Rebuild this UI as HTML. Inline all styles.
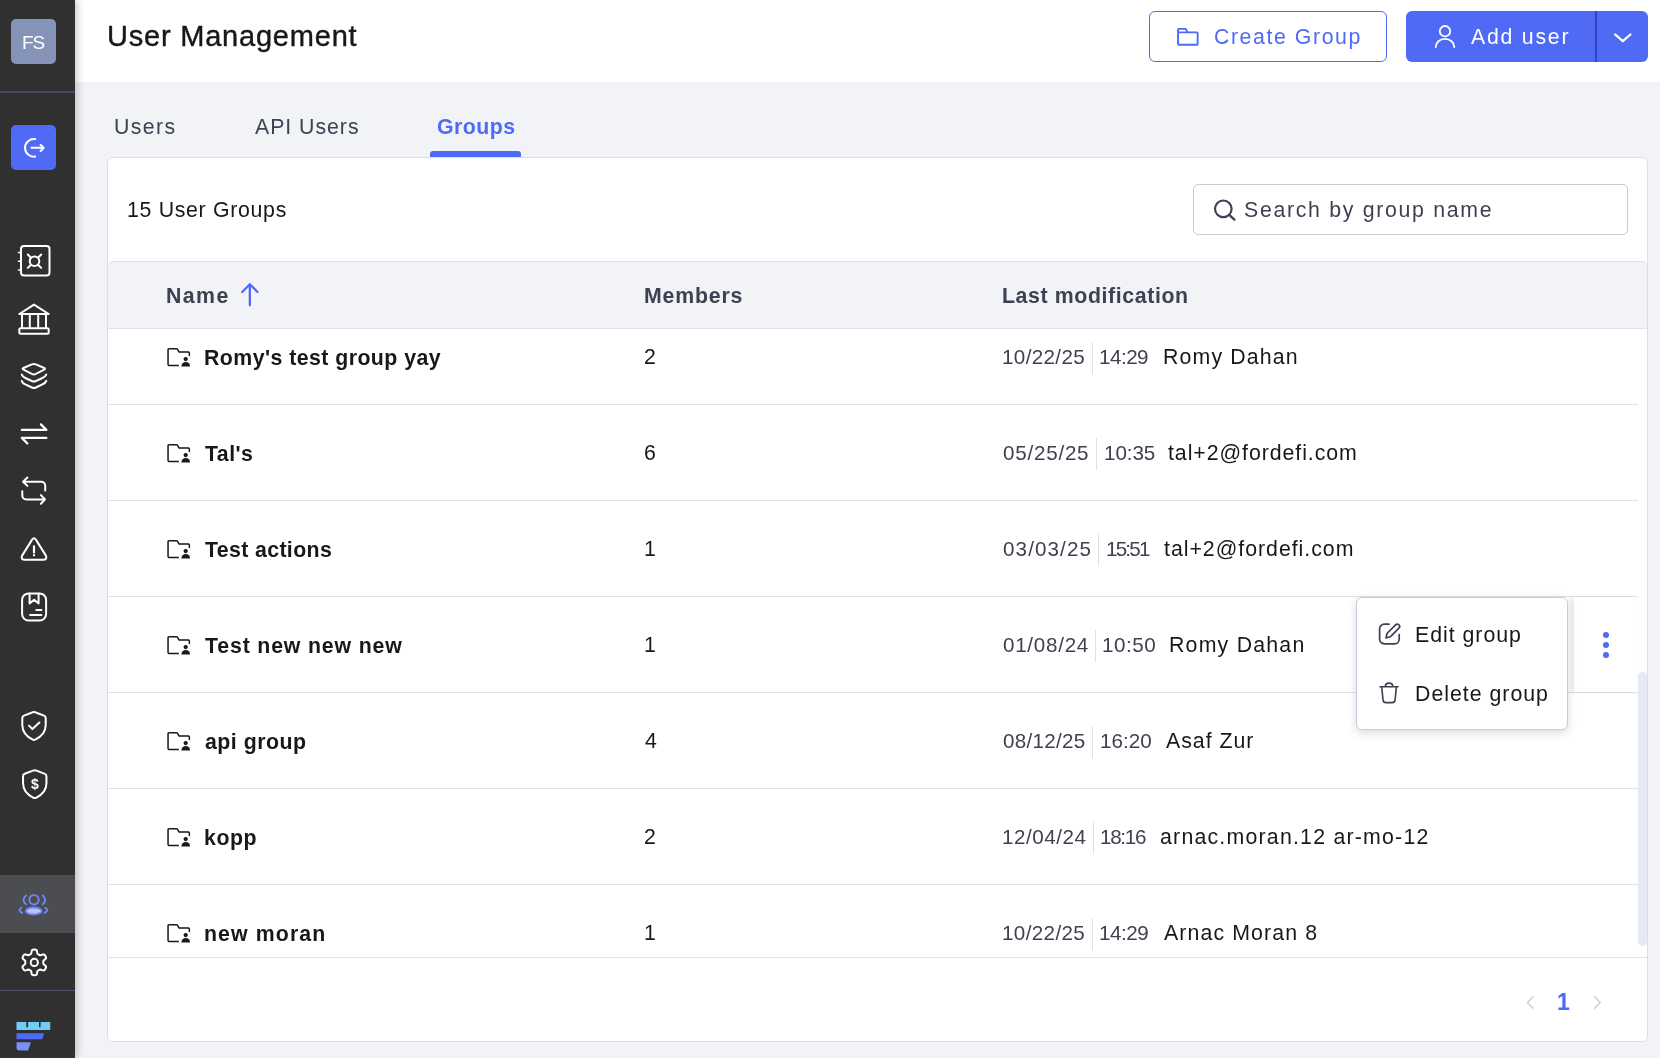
<!DOCTYPE html>
<html lang="en">
<head>
<meta charset="utf-8">
<title>User Management</title>
<style>
*{box-sizing:border-box;margin:0;padding:0}
html,body{width:1660px;height:1058px;overflow:hidden}
body{font-family:"Liberation Sans",sans-serif;background:#f2f3f7;color:#17181c;position:relative}
.abs{position:absolute}
.t{position:absolute;white-space:nowrap;font-weight:400;will-change:transform}
.b{font-weight:700}
#side{position:absolute;left:0;top:0;width:75px;height:1058px;background:#303030;box-shadow:1px 0 9px rgba(0,0,0,.27);z-index:5}
#side .av{position:absolute;left:11px;top:19px;width:45px;height:45px;border-radius:5px;background:#8693b8;color:#fff}
#side .hr1{position:absolute;left:0;top:91px;width:75px;height:2px;background:#474b60}
#side .hr2{position:absolute;left:0;top:990px;width:75px;height:1px;background:#4d5270}
#side .out{position:absolute;left:11px;top:125px;width:45px;height:45px;border-radius:5px;background:#4f6af5}
#side .act{position:absolute;left:0;top:875px;width:75px;height:58px;background:#4c4d50}
#side svg{position:absolute;overflow:visible;will-change:transform}
.ic{fill:none;stroke:#fff;stroke-width:2;stroke-linecap:round;stroke-linejoin:round}
#head{position:absolute;left:75px;top:0;width:1585px;height:82px;background:#fff}
#head h1{font-weight:400;font-size:inherit}
.btn{position:absolute;top:11px;height:51px;border-radius:6px}
#cg{left:1074px;width:238px;border:1px solid #4f6af5;color:#4f6af5;background:#fff}
#au{left:1331px;width:242px;background:#4f6af5;color:#fff}
#au i{position:absolute;left:189px;top:0;width:2px;height:51px;background:#3043c4}
#tabs{position:absolute;left:0;top:0;color:#3e4152}
#tabs .on{color:#4f6af5}
#ul{position:absolute;left:430px;top:151px;width:91px;height:6px;border-radius:3px 3px 0 0;background:#4f6af5}
#card{position:absolute;left:107px;top:157px;width:1541px;height:885px;background:#fff;border:1px solid #dcdde6;border-radius:6px;overflow:hidden}
#srch{position:absolute;left:1085px;top:26px;width:435px;height:51px;border:1px solid #c8cad4;border-radius:5px;background:#fff;color:#3e4152}
#thead{position:absolute;left:0;top:103px;width:1539px;height:68px;background:#f2f3f7;border-top:1px solid #e0e1e7;border-bottom:1px solid #e0e1e7;border-radius:5px 5px 0 0;color:#3e4152}
#rows{position:absolute;left:0;top:171px;width:1530px;height:628px;overflow:hidden}
.row{position:absolute;left:0;width:1530px;height:96px;border-bottom:1px solid #e0e1e7}
.row .fi{position:absolute;left:58px;top:38px;overflow:visible}
.row .nm{font-weight:700}
.row .dt{color:#3e4152}
.row .dv{position:absolute;top:33px;width:1px;height:32px;background:#e0e1e7}
#foot{position:absolute;left:0;top:799px;width:1539px;height:84px;border-top:1px solid #e0e1e7;background:#fff}
#foot .t{color:#4f6af5}
#sb{position:absolute;left:1530px;top:514px;width:9px;height:274px;border-radius:5px;background:#e8e9f7}
#stk{position:absolute;left:1574px;top:597px;width:63px;height:95px;background:#fff;box-shadow:-3px 0 4px rgba(30,30,40,.09)}
#stk b{position:absolute;left:29px;width:6px;height:6px;border-radius:3px;background:#4f6af5}
#menu{position:absolute;left:1356px;top:597px;width:212px;height:133px;background:#fff;border:1px solid #c9cadb;border-radius:6px;box-shadow:0 3px 10px rgba(30,30,50,.16);z-index:4}
#menu svg{position:absolute;overflow:visible}
</style>
</head>
<body>
<div id="side">
  <div class="av"><span class="t " style="left:10.8px;top:9.8px;font-size:19px;line-height:27px;letter-spacing:-1.01px;">FS</span></div>
  <div class="hr1"></div>
  <div class="out"></div>
  <div class="act"></div>
  <div class="hr2"></div>
  <svg class="abs" style="left:0;top:0" width="75" height="1058" viewBox="0 0 75 1058">
  <g class="ic" stroke-width="1.700">
    <!-- logout -->
    <path d="M35.200 139.100a8.850 8.850 0 1 0 0 17.500"/>
    <path d="M31.400 147.850h12.300M40.600 144.700l3.150 3.150l-3.150 3.150"/>
  </g>
  <g class="ic">
    <!-- safe -->
    <rect x="21" y="246.100" width="28.500" height="29.400" rx="3"/>
    <path d="M18.5 252.5h2M18.5 261.2h2M18.5 270h2" stroke-width="1.6"/>
    <circle cx="34.5" cy="261.2" r="4.8"/>
    <path d="M31 257.7l-3.2-3.2M38 257.7l3.2-3.2M31 264.7l-3.2 3.2M38 264.7l3.2 3.2"/>
    <!-- bank -->
    <path d="M19.3 314L34 304.6L48.7 314z"/>
    <path d="M22 314.5v13M29.8 314.5v13M38.2 314.5v13M46 314.5v13"/>
    <rect x="19.300" y="328.300" width="29.400" height="5.500" rx="1.500"/>
    <!-- layers -->
    <path d="M31.800 364.400Q33.850 363.400 35.900 364.400L44.200 368Q45.800 368.800 44.200 369.600L35.900 373.900Q33.850 374.900 31.800 373.900L23.500 369.600Q21.700 368.800 23.500 368Z"/>
    <path d="M21.750 374.500Q22.300 376.600 25.300 378L31.800 381Q33.850 382 35.900 381L42.400 378Q45.600 376.600 46.300 374.500M21.750 380.900Q22.300 383 25.300 384.400L31.800 387.500Q33.850 388.500 35.900 387.500L42.400 384.400Q45.600 383 46.300 380.900"/>
    <!-- swap -->
    <path d="M21.800 429.900H46.400L40.900 424.400M46.400 437.900H21.800L27.300 443.400" stroke-width="2.200"/>
    <!-- repeat -->
    <path d="M27.400 477.500L23 481.700L27.400 485.900M23 481.700H41.200a4 4 0 0 1 4 4V490.400"/>
    <path d="M40.900 495.100L45 499.400L40.900 503.700M45 499.400H26.300a4 4 0 0 1-4-4V491.300"/>
    <!-- warning -->
    <path d="M32.100 539.600q1.900-2.900 3.800 0L45.900 555.600q1.600 3.600-2.200 4.100H24.300q-3.800-.5-2.200-4.100z"/>
    <path d="M34 546.300v6.200M34 555.200v.1" stroke-width="2.200"/>
    <!-- archive -->
    <rect x="22.100" y="593.400" width="24" height="27.100" rx="6.500"/>
    <path d="M29.600 593.800v9.600l4.500-3.600l4.500 3.600v-9.600"/>
    <path d="M36.300 609.900h5.100M30.100 615.100h11.300"/>
    <!-- shield check -->
    <path d="M34.00 712.00 Q33.00 712.00 31.50 712.70 L24.00 715.60 Q22.30 716.30 22.30 718.00 V725.00 Q22.30 734.50 32.80 739.60 Q34.00 740.20 35.20 739.60 Q45.70 734.50 45.70 725.00 V718.00 Q45.70 716.30 44.00 715.60 L36.50 712.70 Q35.00 712.00 34.00 712.00 Z"/>
    <path d="M29 725.600l3.400 3.400l7-6.500"/>
    <!-- shield dollar -->
    <path d="M34.75 770.20 Q33.75 770.20 32.25 770.90 L24.75 773.80 Q23.05 774.50 23.05 776.20 V783.20 Q23.05 792.70 33.55 797.80 Q34.75 798.40 35.95 797.80 Q46.45 792.70 46.45 783.20 V776.20 Q46.45 774.50 44.75 773.80 L37.25 770.90 Q35.75 770.20 34.75 770.20 Z"/>
  </g>
  <text x="35" y="789.400" text-anchor="middle" font-family="Liberation Sans,sans-serif" font-size="14" font-weight="700" fill="#fff">$</text>
  <!-- users (active) -->
  <g fill="none" stroke="#7386f7" stroke-width="1.900" stroke-linecap="round">
    <circle cx="34" cy="899.800" r="4.700"/>
    <path d="M26.100 895.400Q20.800 899.900 26.100 904.400M42.700 895.400Q47.500 899.900 42.700 904.400"/>
    <ellipse cx="33.700" cy="911" rx="7.900" ry="3.500" fill="#bcc5fb"/>
    <path d="M21.500 907.800Q17.300 910.600 22.100 912.900M45.300 907.800Q49.500 910.600 44.500 912.900"/>
  </g>
  <!-- gear -->
  <g class="ic">
    <circle cx="34.300" cy="962.400" r="3.600"/>
    <path d="M43.3 962.4L43.3 962.0L43.3 961.6L43.3 961.2L43.5 960.8L44.0 960.3L44.8 959.6L45.7 958.8L46.0 958.1L46.0 957.5L45.9 957.0L45.6 956.5L45.4 956.0L45.1 955.5L44.8 955.1L44.4 954.7L43.8 954.4L43.1 954.4L42.0 954.7L41.0 955.1L40.3 955.2L39.9 955.2L39.5 955.0L39.1 954.8L38.8 954.6L38.5 954.4L38.1 954.2L37.8 954.0L37.5 953.6L37.3 953.0L37.1 951.9L36.9 950.8L36.5 950.1L36.0 949.8L35.4 949.7L34.9 949.6L34.3 949.6L33.7 949.6L33.2 949.7L32.6 949.8L32.1 950.1L31.7 950.8L31.5 951.9L31.3 953.0L31.1 953.6L30.8 954.0L30.5 954.2L30.1 954.4L29.8 954.6L29.5 954.8L29.1 955.0L28.7 955.2L28.3 955.2L27.6 955.1L26.6 954.7L25.5 954.4L24.8 954.4L24.2 954.7L23.8 955.1L23.5 955.5L23.2 956.0L23.0 956.5L22.7 957.0L22.6 957.5L22.6 958.1L22.9 958.8L23.8 959.6L24.6 960.3L25.1 960.8L25.3 961.2L25.3 961.6L25.3 962.0L25.3 962.4L25.3 962.8L25.3 963.2L25.3 963.6L25.1 964.0L24.6 964.5L23.8 965.2L22.9 966.0L22.6 966.7L22.6 967.3L22.7 967.8L23.0 968.3L23.2 968.8L23.5 969.3L23.8 969.7L24.2 970.1L24.8 970.4L25.5 970.4L26.6 970.1L27.6 969.7L28.3 969.6L28.7 969.6L29.1 969.8L29.5 970.0L29.8 970.2L30.1 970.4L30.5 970.6L30.8 970.8L31.1 971.2L31.3 971.8L31.5 972.9L31.7 974.0L32.1 974.7L32.6 975.0L33.2 975.1L33.7 975.2L34.3 975.2L34.9 975.2L35.4 975.1L36.0 975.0L36.5 974.7L36.9 974.0L37.1 972.9L37.3 971.8L37.5 971.2L37.8 970.8L38.1 970.6L38.5 970.4L38.8 970.2L39.1 970.0L39.5 969.8L39.9 969.6L40.3 969.6L41.0 969.7L42.0 970.1L43.1 970.4L43.8 970.4L44.4 970.1L44.8 969.7L45.1 969.3L45.4 968.8L45.6 968.3L45.9 967.8L46.0 967.3L46.0 966.7L45.7 966.0L44.8 965.2L44.0 964.5L43.5 964.0L43.3 963.6L43.3 963.2L43.3 962.8z"/>
  </g>
  <!-- logo -->
  <path d="M16.500 1022h9.800v5.300h1.800v-5.300h10.900v5.300h1.600v-5.300h9.600v8h-33.700z" fill="#6fcdf5"/>
  <path d="M16.500 1033.300h27.600l-1.900 6h-25.700z" fill="#4f6af5"/>
  <path d="M16.500 1042.300h14.400l-2.700 8.200h-8.700q-3 0-3-3z" fill="#7b8ef8"/>
</svg>

</div>
<div id="head">
  <h1><span class="t " style="left:31.7px;top:16.4px;font-size:29px;line-height:41px;letter-spacing:0.79px;-webkit-text-stroke:.4px #17181c;">User Management</span></h1>
  <div class="btn" id="cg">
    <svg class="abs" style="left:27px;top:16px" width="23" height="20" viewBox="0 0 23 20"><path d="M1.050 15.950V1.650a.8 .8 0 0 1 .8-.8h6.300q.6 0 .9 .5l1.600 3.050h9.200a.8 .8 0 0 1 .8 .8v10.750a.8 .8 0 0 1-.8 .8H1.850a.8 .8 0 0 1-.8-.8zM1.050 4.400h9.600" fill="none" stroke="#4f6af5" stroke-width="1.900" stroke-linejoin="round"/></svg>
    <span class="t " style="left:63.9px;top:9.5px;font-size:21.3px;line-height:30px;letter-spacing:1.57px;">Create Group</span></div>
  <div class="btn" id="au">
    <svg class="abs" style="left:27px;top:13px" width="24" height="26" viewBox="0 0 24 26"><circle cx="12" cy="7.200" r="5.200" fill="none" stroke="#fff" stroke-width="1.800"/><path d="M2.700 23a9.300 8.100 0 0 1 18.600 0" fill="none" stroke="#fff" stroke-width="1.800" stroke-linecap="round"/></svg>
    <span class="t " style="left:65.3px;top:10.5px;font-size:21.3px;line-height:30px;letter-spacing:1.76px;">Add user</span><i></i>
    <svg class="abs" style="left:207px;top:21px" width="20" height="12" viewBox="0 0 20 12"><path d="M2.200 2.500l7.600 6.700l7.600-6.700" fill="none" stroke="#fff" stroke-width="2.300" stroke-linecap="round" stroke-linejoin="round"/></svg>
  </div>
</div>
<div id="tabs"><span class="t " style="left:114.1px;top:111.8px;font-size:21.3px;line-height:30px;letter-spacing:1.36px;">Users</span><span class="t " style="left:255.0px;top:111.8px;font-size:21.3px;line-height:30px;letter-spacing:0.96px;">API Users</span><span class="t b on" style="left:437.1px;top:111.8px;font-size:21.3px;line-height:30px;letter-spacing:0.46px;">Groups</span></div>
<div id="ul"></div>
<div id="card">
  <span class="t " style="left:19.0px;top:37.2px;font-size:21.3px;line-height:30px;letter-spacing:0.69px;">15 User Groups</span>
  <div id="srch">
    <svg class="abs" style="left:19px;top:13px" width="26" height="26" viewBox="0 0 26 26"><circle cx="10.300" cy="10.800" r="8.300" fill="none" stroke="#3e4152" stroke-width="2.200"/><path d="M16.500 17.100l4.900 4.600" stroke="#3e4152" stroke-width="2.300" stroke-linecap="round"/></svg>
    <span class="t " style="left:50.2px;top:10.3px;font-size:21.3px;line-height:30px;letter-spacing:1.69px;">Search by group name</span></div>
  <div id="thead">
    <span class="t b" style="left:57.9px;top:18.5px;font-size:21.3px;line-height:30px;letter-spacing:1.41px;">Name</span>
    <svg class="abs" style="left:132px;top:21px" width="20" height="26" viewBox="0 0 20 26"><path d="M9.850 22.300V1.300M2.200 9l7.650-7.700l7.650 7.700" fill="none" stroke="#4f6af5" stroke-width="2.300" stroke-linecap="round" stroke-linejoin="round"/></svg>
    <span class="t b" style="left:535.5px;top:18.5px;font-size:21.3px;line-height:30px;letter-spacing:0.81px;">Members</span><span class="t b" style="left:894.0px;top:18.5px;font-size:21.3px;line-height:30px;letter-spacing:0.61px;">Last modification</span>
  </div>
  <div id="rows">
    <div class="row" style="top:-20px"><svg class="fi" width="25" height="20" viewBox="0 0 25 20"><path d="M12.300 18.550H3.050a1 1 0 0 1-1-1V2.750a1 1 0 0 1 1-1h7.300q.8 0 1.200 .7l1.500 2.600h9.300a1 1 0 0 1 1 1v2.500" fill="none" stroke="#17181c" stroke-width="1.500" stroke-linejoin="round" stroke-linecap="round"/><circle cx="19.700" cy="12.100" r="2.150" fill="#17181c"/><path d="M15.400 19.400a4.350 4.300 0 0 1 8.700 0z" fill="#17181c"/></svg><span class="t nm" style="left:96.2px;top:33.8px;font-size:21.3px;line-height:30px;letter-spacing:0.45px;">Romy's test group yay</span><span class="t mb" style="left:535.5px;top:32.9px;font-size:21.3px;line-height:30px;">2</span><span class="t dt" style="left:894.2px;top:32.8px;font-size:20.6px;line-height:29px;letter-spacing:0.36px;">10/22/25</span><span class="t dt" style="left:991.3px;top:32.8px;font-size:20.6px;line-height:29px;letter-spacing:-0.50px;">14:29</span><span class="t wh" style="left:1055.0px;top:32.8px;font-size:21.3px;line-height:30px;letter-spacing:1.15px;">Romy Dahan</span><i class="dv" style="left:984px"></i></div>
    <div class="row" style="top:76px"><svg class="fi" width="25" height="20" viewBox="0 0 25 20"><path d="M12.300 18.550H3.050a1 1 0 0 1-1-1V2.750a1 1 0 0 1 1-1h7.300q.8 0 1.200 .7l1.500 2.600h9.300a1 1 0 0 1 1 1v2.500" fill="none" stroke="#17181c" stroke-width="1.500" stroke-linejoin="round" stroke-linecap="round"/><circle cx="19.700" cy="12.100" r="2.150" fill="#17181c"/><path d="M15.400 19.400a4.350 4.300 0 0 1 8.700 0z" fill="#17181c"/></svg><span class="t nm" style="left:97.2px;top:33.8px;font-size:21.3px;line-height:30px;letter-spacing:0.44px;">Tal's</span><span class="t mb" style="left:535.5px;top:32.9px;font-size:21.3px;line-height:30px;">6</span><span class="t dt" style="left:895.2px;top:32.8px;font-size:20.6px;line-height:29px;letter-spacing:0.77px;">05/25/25</span><span class="t dt" style="left:995.5px;top:32.8px;font-size:20.6px;line-height:29px;letter-spacing:-0.07px;">10:35</span><span class="t wh" style="left:1060.3px;top:32.8px;font-size:21.3px;line-height:30px;letter-spacing:0.94px;">tal+2@fordefi.com</span><i class="dv" style="left:988px"></i></div>
    <div class="row" style="top:172px"><svg class="fi" width="25" height="20" viewBox="0 0 25 20"><path d="M12.300 18.550H3.050a1 1 0 0 1-1-1V2.750a1 1 0 0 1 1-1h7.300q.8 0 1.200 .7l1.500 2.600h9.300a1 1 0 0 1 1 1v2.500" fill="none" stroke="#17181c" stroke-width="1.500" stroke-linejoin="round" stroke-linecap="round"/><circle cx="19.700" cy="12.100" r="2.150" fill="#17181c"/><path d="M15.400 19.400a4.350 4.300 0 0 1 8.700 0z" fill="#17181c"/></svg><span class="t nm" style="left:96.9px;top:33.8px;font-size:21.3px;line-height:30px;letter-spacing:0.37px;">Test actions</span><span class="t mb" style="left:535.5px;top:32.9px;font-size:21.3px;line-height:30px;">1</span><span class="t dt" style="left:895.2px;top:32.8px;font-size:20.6px;line-height:29px;letter-spacing:1.11px;">03/03/25</span><span class="t dt" style="left:997.9px;top:32.8px;font-size:20.6px;line-height:29px;letter-spacing:-1.80px;">15:51</span><span class="t wh" style="left:1056.0px;top:32.8px;font-size:21.3px;line-height:30px;letter-spacing:0.98px;">tal+2@fordefi.com</span><i class="dv" style="left:990px"></i></div>
    <div class="row" style="top:268px"><svg class="fi" width="25" height="20" viewBox="0 0 25 20"><path d="M12.300 18.550H3.050a1 1 0 0 1-1-1V2.750a1 1 0 0 1 1-1h7.300q.8 0 1.200 .7l1.500 2.600h9.300a1 1 0 0 1 1 1v2.500" fill="none" stroke="#17181c" stroke-width="1.500" stroke-linejoin="round" stroke-linecap="round"/><circle cx="19.700" cy="12.100" r="2.150" fill="#17181c"/><path d="M15.400 19.400a4.350 4.300 0 0 1 8.700 0z" fill="#17181c"/></svg><span class="t nm" style="left:96.9px;top:33.8px;font-size:21.3px;line-height:30px;letter-spacing:0.84px;">Test new new new</span><span class="t mb" style="left:535.5px;top:32.9px;font-size:21.3px;line-height:30px;">1</span><span class="t dt" style="left:895.2px;top:32.8px;font-size:20.6px;line-height:29px;letter-spacing:0.73px;">01/08/24</span><span class="t dt" style="left:994.2px;top:32.8px;font-size:20.6px;line-height:29px;letter-spacing:0.55px;">10:50</span><span class="t wh" style="left:1061.4px;top:32.8px;font-size:21.3px;line-height:30px;letter-spacing:1.22px;">Romy Dahan</span><i class="dv" style="left:987px"></i></div>
    <div class="row" style="top:364px"><svg class="fi" width="25" height="20" viewBox="0 0 25 20"><path d="M12.300 18.550H3.050a1 1 0 0 1-1-1V2.750a1 1 0 0 1 1-1h7.300q.8 0 1.200 .7l1.500 2.600h9.300a1 1 0 0 1 1 1v2.500" fill="none" stroke="#17181c" stroke-width="1.500" stroke-linejoin="round" stroke-linecap="round"/><circle cx="19.700" cy="12.100" r="2.150" fill="#17181c"/><path d="M15.400 19.400a4.350 4.300 0 0 1 8.700 0z" fill="#17181c"/></svg><span class="t nm" style="left:96.9px;top:33.8px;font-size:21.3px;line-height:30px;letter-spacing:0.51px;">api group</span><span class="t mb" style="left:536.5px;top:32.9px;font-size:21.3px;line-height:30px;">4</span><span class="t dt" style="left:895.2px;top:32.8px;font-size:20.6px;line-height:29px;letter-spacing:0.30px;">08/12/25</span><span class="t dt" style="left:991.6px;top:32.8px;font-size:20.6px;line-height:29px;letter-spacing:0.05px;">16:20</span><span class="t wh" style="left:1057.7px;top:32.8px;font-size:21.3px;line-height:30px;letter-spacing:0.99px;">Asaf Zur</span><i class="dv" style="left:984px"></i></div>
    <div class="row" style="top:460px"><svg class="fi" width="25" height="20" viewBox="0 0 25 20"><path d="M12.300 18.550H3.050a1 1 0 0 1-1-1V2.750a1 1 0 0 1 1-1h7.300q.8 0 1.200 .7l1.500 2.600h9.300a1 1 0 0 1 1 1v2.500" fill="none" stroke="#17181c" stroke-width="1.500" stroke-linejoin="round" stroke-linecap="round"/><circle cx="19.700" cy="12.100" r="2.150" fill="#17181c"/><path d="M15.400 19.400a4.350 4.300 0 0 1 8.700 0z" fill="#17181c"/></svg><span class="t nm" style="left:96.2px;top:33.8px;font-size:21.3px;line-height:30px;letter-spacing:0.55px;">kopp</span><span class="t mb" style="left:535.5px;top:32.9px;font-size:21.3px;line-height:30px;">2</span><span class="t dt" style="left:894.2px;top:32.8px;font-size:20.6px;line-height:29px;letter-spacing:0.53px;">12/04/24</span><span class="t dt" style="left:991.8px;top:32.8px;font-size:20.6px;line-height:29px;letter-spacing:-1.30px;">18:16</span><span class="t wh" style="left:1052.4px;top:32.8px;font-size:21.3px;line-height:30px;letter-spacing:1.22px;">arnac.moran.12 ar-mo-12</span><i class="dv" style="left:985px"></i></div>
    <div class="row" style="top:556px"><svg class="fi" width="25" height="20" viewBox="0 0 25 20"><path d="M12.300 18.550H3.050a1 1 0 0 1-1-1V2.750a1 1 0 0 1 1-1h7.300q.8 0 1.200 .7l1.500 2.600h9.300a1 1 0 0 1 1 1v2.500" fill="none" stroke="#17181c" stroke-width="1.500" stroke-linejoin="round" stroke-linecap="round"/><circle cx="19.700" cy="12.100" r="2.150" fill="#17181c"/><path d="M15.400 19.400a4.350 4.300 0 0 1 8.700 0z" fill="#17181c"/></svg><span class="t nm" style="left:96.2px;top:33.8px;font-size:21.3px;line-height:30px;letter-spacing:1.11px;">new moran</span><span class="t mb" style="left:535.5px;top:32.9px;font-size:21.3px;line-height:30px;">1</span><span class="t dt" style="left:894.2px;top:32.8px;font-size:20.6px;line-height:29px;letter-spacing:0.37px;">10/22/25</span><span class="t dt" style="left:991.3px;top:32.8px;font-size:20.6px;line-height:29px;letter-spacing:-0.47px;">14:29</span><span class="t wh" style="left:1055.7px;top:32.8px;font-size:21.3px;line-height:30px;letter-spacing:1.11px;">Arnac Moran 8</span><i class="dv" style="left:984px"></i></div>
  </div>
  <div id="sb"></div>
  <div id="foot">
    <svg class="abs" style="left:1418px;top:37px" width="9" height="15" viewBox="0 0 9 15"><path d="M7 1.700L1.400 7.500l5.600 5.800" fill="none" stroke="#cdced6" stroke-width="1.500" stroke-linecap="round" stroke-linejoin="round"/></svg>
    <span class="t b" style="left:1449.0px;top:28.3px;font-size:23px;line-height:32px;">1</span>
    <svg class="abs" style="left:1485px;top:37px" width="9" height="15" viewBox="0 0 9 15"><path d="M1.600 1.700l5.600 5.800l-5.600 5.800" fill="none" stroke="#cdced6" stroke-width="1.500" stroke-linecap="round" stroke-linejoin="round"/></svg>
  </div>
</div>
<div id="stk"><b style="top:35px"></b><b style="top:45px"></b><b style="top:54.500px"></b></div>
<div id="menu">
  <svg style="left:21px;top:23.700px" width="24" height="24" viewBox="0 0 24 24"><path d="M11 2.200H6.200a4.600 4.600 0 0 0-4.600 4.600v10.400a4.600 4.600 0 0 0 4.600 4.600h10.400a4.600 4.600 0 0 0 4.600-4.600V12.500" fill="none" stroke="#3e4152" stroke-width="1.700" stroke-linecap="round"/><path d="M8 16l1-4.500l8.600-8.600a2.300 2.300 0 0 1 3.300 3.300L12.300 14.800z" fill="none" stroke="#3e4152" stroke-width="1.700" stroke-linejoin="round"/></svg>
  <span class="t " style="left:57.6px;top:21.7px;font-size:21.3px;line-height:30px;letter-spacing:0.98px;">Edit group</span>
  <svg style="left:22px;top:84px" width="22" height="23" viewBox="0 0 22 23"><path d="M1 4.700h18.100M6.300 4.400q0-3.300 3.750-3.300t3.750 3.300" fill="none" stroke="#3e4152" stroke-width="1.600" stroke-linecap="round"/><path d="M2.700 4.900l1.300 12.900q.3 2.800 3 2.800h6.100q2.700 0 3-2.800L17.400 4.900" fill="none" stroke="#3e4152" stroke-width="1.600" stroke-linejoin="round"/></svg>
  <span class="t " style="left:57.6px;top:81.0px;font-size:21.3px;line-height:30px;letter-spacing:1.00px;">Delete group</span>
</div>
</body>
</html>
